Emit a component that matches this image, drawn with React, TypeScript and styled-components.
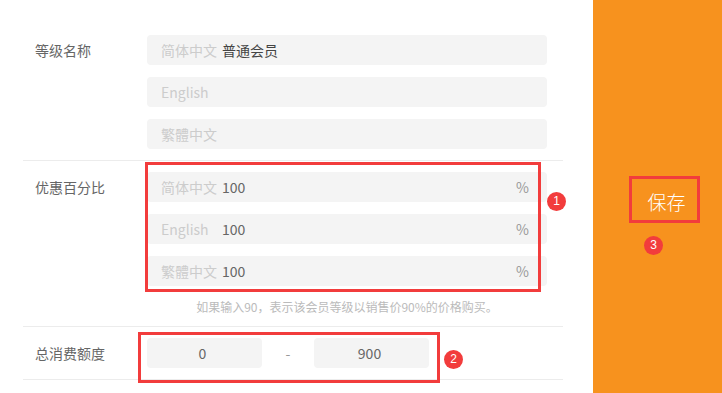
import React from 'react';
import styled, { createGlobalStyle } from 'styled-components';

const GlobalStyle = createGlobalStyle`
  html, body {
    margin: 0;
    padding: 0;
    background: #fff;
    font-family: "Noto Sans CJK SC", "Noto Sans", "Liberation Sans", sans-serif;
  }
`;

const Page = styled.div`
  position: relative;
  display: flex;
  width: 722px;
  height: 393px;
  overflow: hidden;
`;

const Main = styled.div`
  flex: 1;
  padding: 24px 0 0 23px;
`;

const Form = styled.div`
  width: 540px;
`;

const Section = styled.div`
  display: flex;
  padding: 11px 0;
  border-bottom: 1px solid #ececec;
`;

const Label = styled.div`
  width: 112px;
  padding-left: 12px;
  line-height: 30px;
  font-size: 14px;
  color: #666;
`;

const Fields = styled.div`
  width: 400px;
  display: flex;
  flex-direction: column;
  gap: 12px;
`;

const InputBox = styled.div<{ $center?: boolean; $width?: number }>`
  display: flex;
  align-items: center;
  justify-content: ${({ $center }) => ($center ? 'center' : 'flex-start')};
  width: ${({ $width }) => ($width ? `${$width}px` : 'auto')};
  height: 30px;
  box-sizing: border-box;
  padding: 0 18px 0 14px;
  background: #f4f4f4;
  border-radius: 4px;
  font-size: 14px;
  color: #666;
`;

const Prefix = styled.span`
  width: 56px;
  margin-right: 5px;
  color: #ccc;
  white-space: nowrap;
`;

const Value = styled.span<{ $dark?: boolean }>`
  color: ${({ $dark }) => ($dark ? '#444' : '#666')};
`;

const Suffix = styled.span`
  margin-left: auto;
  color: #999;
`;

const Hint = styled.div`
  margin-top: 1px;
  line-height: 16px;
  font-size: 12px;
  color: #bbb;
  text-align: center;
`;

const Range = styled.div`
  display: flex;
  align-items: center;
`;

const Dash = styled.span`
  width: 52px;
  text-align: center;
  color: #999;
  font-size: 14px;
`;

const SidePanel = styled.div`
  width: 129px;
  background: #f7921e;
  display: flex;
  align-items: flex-start;
  justify-content: center;
`;

const SaveButton = styled.button`
  margin-top: 189px;
  margin-left: 18px;
  border: none;
  background: transparent;
  color: #fff;
  font-family: inherit;
  font-size: 19px;
  font-weight: 300;
  line-height: 26px;
  padding: 0;
  cursor: pointer;
`;

const Mark = styled.div`
  position: absolute;
  border: 3px solid #f23c3c;
  box-sizing: border-box;
  pointer-events: none;
`;

const Badge = styled.div`
  position: absolute;
  width: 19px;
  height: 19px;
  margin: -10px 0 0 -10px;
  border-radius: 50%;
  background: #f23c3c;
  color: #fff;
  font-family: "Liberation Sans", sans-serif;
  font-size: 12px;
  line-height: 19px;
  text-align: center;
`;

const langs = ['简体中文', 'English', '繁體中文'];

export default function App() {
  return (
    <>
      <GlobalStyle />
      <Page>
        <Main>
          <Form>
            <Section>
              <Label>等级名称</Label>
              <Fields>
                <InputBox>
                  <Prefix>简体中文</Prefix>
                  <Value $dark>普通会员</Value>
                </InputBox>
                <InputBox>
                  <Prefix>English</Prefix>
                </InputBox>
                <InputBox>
                  <Prefix>繁體中文</Prefix>
                </InputBox>
              </Fields>
            </Section>
            <Section>
              <Label>优惠百分比</Label>
              <Fields>
                {langs.map(l => (
                  <InputBox key={l}>
                    <Prefix>{l}</Prefix>
                    <Value>100</Value>
                    <Suffix>%</Suffix>
                  </InputBox>
                ))}
                <Hint>如果输入90，表示该会员等级以销售价90%的价格购买。</Hint>
              </Fields>
            </Section>
            <Section>
              <Label>总消费额度</Label>
              <Range>
                <InputBox $center $width={115}>0</InputBox>
                <Dash>-</Dash>
                <InputBox $center $width={115}>900</InputBox>
              </Range>
            </Section>
          </Form>
        </Main>
        <SidePanel>
          <SaveButton>保存</SaveButton>
        </SidePanel>

        <Mark style={{ left: 145, top: 162, width: 396, height: 130 }} />
        <Badge style={{ left: 557, top: 202 }}>1</Badge>
        <Mark style={{ left: 138, top: 332, width: 302, height: 51 }} />
        <Badge style={{ left: 454, top: 360 }}>2</Badge>
        <Mark style={{ left: 629, top: 176, width: 71, height: 47 }} />
        <Badge style={{ left: 654, top: 246 }}>3</Badge>
      </Page>
    </>
  );
}
